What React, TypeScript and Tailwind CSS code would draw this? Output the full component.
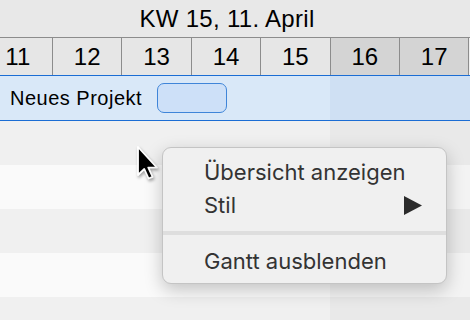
const days = [
  { n: "11", we: false },
  { n: "12", we: false },
  { n: "13", we: false },
  { n: "14", we: false },
  { n: "15", we: false },
  { n: "16", we: true },
  { n: "17", we: true },
];

const stripes = ["gray", "light", "gray", "light", "gray"];

const Cursor = () => (
  <svg width="28" height="40" viewBox="0 0 28 40" className="absolute left-[135px] top-[144px]">
    <path
      d="M3 3 L3 31 L9.3 25 L13.6 34.5 L17.6 32.8 L13.3 23.6 L22 23.6 Z"
      fill="#000"
      stroke="#fff"
      strokeWidth="1.8"
      strokeLinejoin="round"
      style={{ filter: "drop-shadow(1px 2px 1.5px rgba(0,0,0,0.35))" }}
    />
  </svg>
);

const ContextMenu = () => (
  <div className="absolute left-[162px] top-[147px] w-[285px] h-[137px] rounded-[9px] bg-[#f0f0f0] border border-[#c4c4c4] shadow-[0_6px_18px_rgba(0,0,0,0.22)] pt-[8px] font-['Inter',sans-serif] text-[22px] text-[#333]">
    <div className="h-[33px] flex items-center pl-[41px]">Übersicht anzeigen</div>
    <div className="h-[33px] flex items-center pl-[41px] pr-[24px] justify-between">
      <span>Stil</span>
      <svg width="18" height="19" viewBox="0 0 18 19">
        <path d="M0 0 L18 9.5 L0 19 Z" fill="#2b2b2b" />
      </svg>
    </div>
    <div className="h-[22px] flex items-center">
      <div className="w-full h-[4px] bg-[#dedede]" />
    </div>
    <div className="h-[34px] flex items-center pl-[41px]">Gantt ausblenden</div>
  </div>
);

export default function App() {
  return (
    <div className="relative w-[470px] h-[320px] overflow-hidden bg-[#efefef] font-['Liberation_Sans',Arial,sans-serif] text-black">
      <div className="h-[38px] bg-[#e8e8e8] border-b border-[#8c8c8c] flex items-center justify-center pr-[16px] text-[24px] tracking-[0.3px]">
        KW 15, 11. April
      </div>
      <div className="flex h-[37px] -ml-[16.4px]">
        {days.map((d) => (
          <div
            key={d.n}
            className={`w-[69.4px] shrink-0 border-r border-[#8c8c8c] flex items-center justify-center text-[24px] ${
              d.we ? "bg-[#d4d4d4]" : "bg-[#e6e6e6]"
            }`}
          >
            {d.n}
          </div>
        ))}
      </div>
      <div className="flex h-[46px] border-y border-[#1b6dd4]">
        <div className="w-[330px] bg-[#d9e8f8] flex items-center pl-[10px] gap-[15px] text-[20px] tracking-[0.5px]">
          <span>Neues Projekt</span>
          <div className="w-[70px] h-[30px] rounded-[7px] border border-[#3f85d9] bg-[#cde0f8]" />
        </div>
        <div className="flex-1 bg-[#cfe0f3]" />
      </div>
      {stripes.map((s, i) => (
        <div key={i} className="flex h-[44px]">
          <div className={`w-[330px] ${s === "gray" ? "bg-[#f0f0f0]" : "bg-[#fafafa]"}`} />
          <div className={`flex-1 ${s === "gray" ? "bg-[#e9e9e9]" : "bg-[#f3f3f3]"}`} />
        </div>
      ))}
      <Cursor />
      <ContextMenu />
    </div>
  );
}
